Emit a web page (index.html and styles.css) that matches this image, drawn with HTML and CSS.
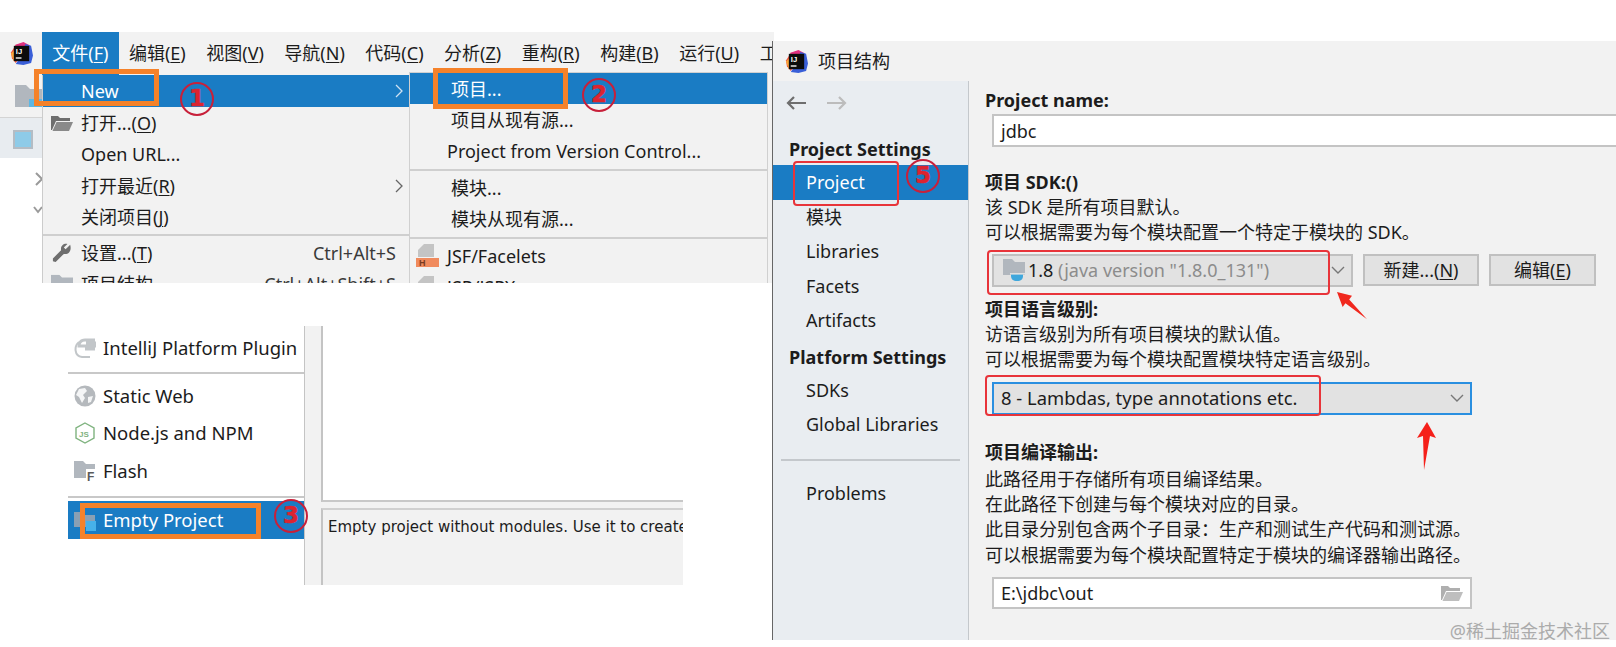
FILE: index.html
```html
<!DOCTYPE html>
<html lang="zh-CN">
<head>
<meta charset="utf-8">
<title>项目结构</title>
<link rel="stylesheet" href="styles.css">
</head>
<body>
<svg class="defs" width="0" height="0" aria-hidden="true">
  <symbol id="logo" viewBox="0 0 24 24">
    <path d="M1 11 L6 3 L13 1 L17 6 L6 22 L2 17Z" fill="#f0503c"/>
    <path d="M5 3 L14 0 L20 3 L23 10 L18 12 L9 6Z" fill="#e0317f"/>
    <path d="M16 2 L22 4 L24 14 L22 22 L14 24 L6 23 L12 14Z" fill="#3a5fd8"/>
    <path d="M1 12 L5 8 L7 18 L4 20Z" fill="#f9a53a"/>
    <rect x="4" y="4" width="16" height="16" fill="#0c0c0c"/>
    <text x="6" y="12.5" class="logo-text">IJ</text>
    <rect x="6" y="16" width="6" height="1.4" fill="#fff"/>
  </symbol>
  <symbol id="folder" viewBox="0 0 24 20">
    <path d="M0 0H9L12 3H24V20H0Z" fill="#b1b7be"/>
  </symbol>
  <symbol id="open-folder" viewBox="0 0 22 16">
    <path d="M0 1H7L9 3H19V6H5L1 15H0Z" fill="#6e6e6e"/>
    <path d="M5.5 7H22L18 16H1.5Z" fill="#8a8a8a"/>
  </symbol>
</svg>

<main class="canvas">

  <section class="ide">
    <header class="menubar">
      <span class="menubar-logo"><svg class="logo-icon"><use href="#logo"/></svg></span>
      <span class="menubar-item menubar-item-active">文件(<u>F</u>)</span>
      <span class="menubar-item">编辑(<u>E</u>)</span>
      <span class="menubar-item">视图(<u>V</u>)</span>
      <span class="menubar-item">导航(<u>N</u>)</span>
      <span class="menubar-item">代码(<u>C</u>)</span>
      <span class="menubar-item">分析(<u>Z</u>)</span>
      <span class="menubar-item">重构(<u>R</u>)</span>
      <span class="menubar-item">构建(<u>B</u>)</span>
      <span class="menubar-item">运行(<u>U</u>)</span>
      <span class="menubar-item">工</span>
    </header>
    <div class="ide-body">
      <aside class="strip">
        <div class="strip-tool">
          <svg class="strip-folder" viewBox="0 0 28 22"><path d="M0 0H11L15 4H28V22H0Z" fill="#b1b7be"/><rect x="14" y="14" width="14" height="8" fill="#5db7e4"/></svg>
        </div>
        <div class="strip-tab"><span class="strip-square"></span></div>
        <div class="strip-tree">
          <svg class="strip-chevron" viewBox="0 0 8 14"><path d="M1 1L7 7L1 13" fill="none" stroke="#9a9a9a" stroke-width="2"/></svg>
          <svg class="strip-chevron strip-chevron-down" viewBox="0 0 10 8"><path d="M1 1L5 6L9 1" fill="none" stroke="#9a9a9a" stroke-width="2"/></svg>
        </div>
      </aside>
      <div class="menu">
        <div class="row row-active"><span class="slot"></span><span class="grow">New</span><svg class="chev" viewBox="0 0 8 14"><path d="M1 1L7 7L1 13" fill="none" stroke="#cfe2f2" stroke-width="1.3"/></svg></div>
        <div class="row"><span class="slot"><svg class="menu-icon" viewBox="0 0 22 16"><use href="#open-folder"/></svg></span><span class="grow">打开...(<u>O</u>)</span></div>
        <div class="row"><span class="slot"></span><span class="grow">Open URL...</span></div>
        <div class="row"><span class="slot"></span><span class="grow">打开最近(<u>R</u>)</span><svg class="chev" viewBox="0 0 8 14"><path d="M1 1L7 7L1 13" fill="none" stroke="#666" stroke-width="1.3"/></svg></div>
        <div class="row"><span class="slot"></span><span class="grow">关闭项目(<u>J</u>)</span></div>
        <div class="sep"></div>
        <div class="row"><span class="slot"><svg class="menu-icon" viewBox="0 0 22 22"><path d="M20 2 L15 7 L13 5 L17 1 C13 0 9 3 10 8 L1 17 L1 20 L4 21 L13 12 C18 13 22 9 20 2Z" fill="#6e6e6e"/></svg></span><span class="grow">设置...(<u>T</u>)</span><span class="shortcut">Ctrl+Alt+S</span></div>
        <div class="row"><span class="slot"><svg class="menu-icon" viewBox="0 0 24 20"><use href="#folder"/></svg></span><span class="grow">项目结构</span><span class="shortcut">Ctrl+Alt+Shift+S</span></div>
      </div>
      <div class="submenu">
        <div class="row row-active row-first sub-row">项目...</div>
        <div class="row sub-row">项目从现有源...</div>
        <div class="row sub-row sub-row-wide">Project from Version Control...</div>
        <div class="sep"></div>
        <div class="row sub-row">模块...</div>
        <div class="row sub-row">模块从现有源...</div>
        <div class="sep"></div>
        <div class="row sub-row sub-row-icon"><svg class="jsf-icon" viewBox="0 0 23 23"><path d="M8 0H18V13H2V6Z" fill="#c4c4c4"/><rect y="14" width="23" height="9" fill="#f08a5d"/><text x="3" y="22" class="jsf-text">H</text></svg>JSF/Facelets</div>
        <div class="row sub-row sub-row-icon"><svg class="jsf-icon" viewBox="0 0 23 23"><path d="M8 0H18V13H2V6Z" fill="#c4c4c4"/></svg>JSP/JSPX</div>
      </div>
    </div>
  </section>

  <section class="wizard">
    <div class="wizard-list">
      <div class="wizard-row wizard-row-first"><svg class="wizard-icon" viewBox="0 0 22 22"><path d="M21 3H11C6 3 5 7 5 9H21V6H12M11 12H21" fill="none" stroke="#c2c6c9" stroke-width="3"/><path d="M5 5C0 9 0 19 8 20H16" fill="none" stroke="#c2c6c9" stroke-width="2"/></svg>IntelliJ Platform Plugin</div>
      <div class="wizard-sep"></div>
      <div class="wizard-row"><svg class="wizard-icon" viewBox="0 0 22 22"><circle cx="11" cy="11" r="10.5" fill="#b5b9bd"/><path d="M5 4L11 3L13 6L9 10L11 13L8 18L5 12L2 10Z M14 12L19 11L17 17L14 18Z" fill="#f4f5f6"/></svg>Static Web</div>
      <div class="wizard-row"><svg class="wizard-icon" viewBox="0 0 22 22"><path d="M11 1L20 6V16L11 21L2 16V6Z" fill="none" stroke="#7fb37f" stroke-width="1.4"/><text x="5" y="15" class="js-text">JS</text></svg>Node.js and NPM</div>
      <div class="wizard-row"><svg class="wizard-icon" viewBox="0 0 22 22"><path d="M0 1H9L12 4H21V18H0Z" fill="#b1b7be"/><rect x="12" y="9" width="10" height="13" fill="#fff"/><text x="13" y="21" class="f-text">F</text></svg>Flash</div>
      <div class="wizard-sep wizard-sep-low"></div>
      <div class="wizard-row wizard-row-active"><svg class="wizard-icon" viewBox="0 0 22 22"><path d="M0 3H9V6H21V18H0Z" fill="#8aa0b4"/><rect x="12" y="12" width="10" height="10" fill="#47b1ea"/></svg>Empty Project</div>
    </div>
    <div class="wizard-gutter"></div>
    <div class="wizard-detail">
      <div class="wizard-blank"></div>
      <div class="wizard-desc">Empty project without modules. Use it to create</div>
    </div>
  </section>

  <section class="dialog">
    <header class="titlebar"><svg class="logo-icon"><use href="#logo"/></svg><span>项目结构</span></header>
    <div class="dialog-body">
      <nav class="sidebar">
        <div class="history">
          <svg class="history-arrow" viewBox="0 0 20 14"><path d="M20 7H2M8 1L2 7L8 13" fill="none" stroke="#6e6e6e" stroke-width="2.2"/></svg>
          <svg class="history-arrow" viewBox="0 0 20 14"><path d="M0 7H18M12 1L18 7L12 13" fill="none" stroke="#bcbcbc" stroke-width="2.2"/></svg>
        </div>
        <div class="side-head">Project Settings</div>
        <div class="side-item side-item-active">Project</div>
        <div class="side-item">模块</div>
        <div class="side-item">Libraries</div>
        <div class="side-item">Facets</div>
        <div class="side-item">Artifacts</div>
        <div class="side-head side-head-platform">Platform Settings</div>
        <div class="side-item">SDKs</div>
        <div class="side-item">Global Libraries</div>
        <div class="side-rule"></div>
        <div class="side-item">Problems</div>
      </nav>
      <div class="content">
        <div class="label label-first">Project name:</div>
        <div class="field field-name">jdbc</div>
        <div class="label label-sdk">项目 SDK:()</div>
        <div class="line">该 SDK 是所有项目默认。</div>
        <div class="line">可以根据需要为每个模块配置一个特定于模块的 SDK。</div>
        <div class="sdk-row">
          <div class="combo combo-sdk">
            <svg class="sdk-icon" viewBox="0 0 22 22"><path d="M0 0H9L12 3H22V16H0Z" fill="#b1b7be"/><path d="M8 14H20V17C20 20 18 22 14 22C10 22 8 20 8 17Z" fill="#3fa7dc"/><rect x="7" y="14" width="15" height="1.6" fill="#e0e0e0"/></svg>
            <span class="grow">1.8 <span class="muted">(java version "1.8.0_131")</span></span>
            <svg class="combo-chev" viewBox="0 0 14 8"><path d="M1 1L7 7L13 1" fill="none" stroke="#777" stroke-width="1.4"/></svg>
          </div>
          <div class="btn btn-new">新建...(<u>N</u>)</div>
          <div class="btn btn-edit">编辑(<u>E</u>)</div>
        </div>
        <div class="label label-lang">项目语言级别:</div>
        <div class="line">访语言级别为所有项目模块的默认值。</div>
        <div class="line">可以根据需要为每个模块配置模块特定语言级别。</div>
        <div class="combo combo-lang">
          <span class="grow">8 - Lambdas, type annotations etc.</span>
          <svg class="combo-chev" viewBox="0 0 14 8"><path d="M1 1L7 7L13 1" fill="none" stroke="#777" stroke-width="1.4"/></svg>
        </div>
        <div class="label label-out">项目编译输出:</div>
        <div class="line line-first">此路径用于存储所有项目编译结果。</div>
        <div class="line">在此路径下创建与每个模块对应的目录。</div>
        <div class="line">此目录分别包含两个子目录：生产和测试生产代码和测试源。</div>
        <div class="line">可以根据需要为每个模块配置特定于模块的编译器输出路径。</div>
        <div class="field field-out"><span class="grow">E:\jdbc\out</span><svg class="out-icon" viewBox="0 0 22 16"><use href="#open-folder"/></svg></div>
      </div>
    </div>
  </section>

  <span class="orange orange-new"></span>
  <span class="orange orange-project"></span>
  <span class="orange orange-empty"></span>
  <span class="badge badge-1">1</span>
  <span class="badge badge-2">2</span>
  <span class="badge badge-3">3</span>
  <span class="badge badge-5">5</span>
  <span class="redbox redbox-project"></span>
  <span class="redbox redbox-sdk"></span>
  <span class="redbox redbox-lang"></span>
  <svg class="arrow arrow-sdk" viewBox="0 0 34 32"><path d="M1 1L17 5L14 9L33 30L10 13L7 17Z" fill="#f0281e"/></svg>
  <svg class="arrow arrow-lang" viewBox="0 0 19 48"><path d="M10 0L19 16L13 14L7 48L6 14L0 16Z" fill="#f5201a"/></svg>
  <span class="watermark">@稀土掘金技术社区</span>
</main>
</body>
</html>
```
FILE: styles.css
```css
* { box-sizing: border-box; }
html, body { margin: 0; padding: 0; background: #fff; }
body {
  font-family: "Noto Sans", "Noto Sans CJK SC", sans-serif;
  font-size: 18px;
  line-height: 26px;
  color: #1c1c1c;
}
.defs { display: none; }
.canvas { position: relative; width: 1616px; height: 647px; overflow: hidden; background: #fff; }
u { text-underline-offset: 2px; text-decoration-thickness: 1px; }
.grow { flex: 1; }

.logo-icon { width: 23px; height: 23px; flex: none; }
.logo-text { font: 700 8px "Liberation Sans", sans-serif; fill: #fff; }

/* IDE window */
.ide { position: absolute; left: 0; top: 32px; width: 774px; height: 251px; background: #f2f2f2; overflow: hidden; }
.menubar { display: flex; height: 43px; }
.menubar-logo { width: 42px; flex: none; display: flex; align-items: center; justify-content: center; }
.menubar-item { flex: none; padding: 0 10.25px; line-height: 42px; white-space: nowrap; }
.menubar-item-active { background: #1a7cc4; color: #fff; }
.ide-body { position: relative; display: flex; height: 208px; }
.strip { width: 42px; flex: none; display: flex; flex-direction: column; }
.strip-tool { height: 43px; border-bottom: 1px solid #d4d4d4; padding: 10px 0 0 15px; overflow: hidden; }
.strip-folder { width: 28px; height: 22px; display: block; }
.strip-tab { height: 40px; background: #e8ecf0; padding: 12px 0 0 13px; }
.strip-square { display: block; width: 20px; height: 19px; background: #8ecbe8; border: 2px solid #b4bcc4; }
.strip-tree { flex: 1; background: #fff; padding: 14px 0 0 35px; }
.strip-chevron { display: block; width: 8px; height: 14px; }
.strip-chevron-down { width: 10px; height: 8px; margin: 20px 0 0 -2px; }

.menu { width: 367px; flex: none; border-left: 1px solid #ccc; }
.row { display: flex; align-items: center; height: 31.5px; padding-right: 5px; white-space: nowrap; }
.row-active { background: #1a7cc4; color: #fff; height: 32px; }
.slot { width: 38px; flex: none; display: flex; justify-content: center; }
.menu-icon { width: 22px; height: 20px; }
.chev { width: 8px; height: 14px; margin-right: 1px; }
.shortcut { color: #3a3a3a; margin-right: 8px; }
.sep { height: 2px; margin: 1px 0; background: #cfcfcf; }

.submenu { position: absolute; left: 409px; top: -3px; width: 359px; height: 220px; background: #f2f2f2; border: 1px solid #d0d0d0; border-bottom: 0; }
.submenu .sep { margin: 1.5px 0; }
.row-first { height: 31px; }
.sub-row { padding-left: 41px; }
.sub-row-wide { padding-left: 37px; }
.sub-row-icon { padding-left: 6px; }
.jsf-icon { width: 23px; height: 23px; margin-right: 8px; flex: none; }
.jsf-text { font: 700 9px "Liberation Sans", sans-serif; fill: #7a3a20; }

/* Wizard */
.wizard { position: absolute; left: 68px; top: 326px; width: 615px; height: 259px; display: flex; background: #fff; overflow: hidden; }
.wizard-list { width: 236px; flex: none; font-size: 18.5px; }
.wizard-row { display: flex; align-items: center; height: 37.5px; white-space: nowrap; padding-left: 6px; }
.wizard-row-first { height: 37px; margin-top: 3px; }
.wizard-row-active { background: #1a7cc4; color: #fff; height: 38px; }
.wizard-icon { width: 22px; height: 22px; margin-right: 7px; flex: none; }
.js-text { font: 700 8px "Liberation Sans", sans-serif; fill: #7fb37f; }
.f-text { font: 700 12px "Liberation Sans", sans-serif; fill: #5a5a5a; }
.wizard-sep { height: 2px; margin: 6px 0 3px; background: #c8c8c8; }
.wizard-sep-low { margin: 6px 0 3px; }
.wizard-gutter { width: 17px; flex: none; background: #f2f2f2; border-left: 1px solid #c4c4c4; }
.wizard-detail { flex: 1; min-width: 0; display: flex; flex-direction: column; background: #f2f2f2; }
.wizard-blank { height: 176px; background: #fff; border-left: 2px solid #c4c4c4; border-bottom: 2px solid #c8c8c8; flex: none; }
.wizard-desc {
  flex: 1; margin-top: 6px; padding: 4px 0 0 5px;
  border-left: 2px solid #c4c4c4; border-top: 2px solid #d0d0d0;
  font-family: "DejaVu Sans", sans-serif; font-size: 15px; white-space: nowrap; overflow: hidden;
}

/* Project structure dialog */
.dialog { position: absolute; left: 772px; top: 41px; width: 844px; height: 599px; background: #f2f2f2; border-left: 1px solid #666; display: flex; flex-direction: column; }
.titlebar { height: 40px; flex: none; display: flex; align-items: center; gap: 10px; padding-left: 12px; }
.dialog-body { flex: 1; display: flex; min-height: 0; }
.sidebar { width: 196px; flex: none; background: #e9edf1; border-right: 1px solid #c4c8cc; }
.history { height: 52px; display: flex; gap: 21px; padding: 15px 0 0 13px; }
.history-arrow { width: 20px; height: 14px; }
.side-head { height: 32px; line-height: 32px; padding-left: 16px; font-weight: 700; white-space: nowrap; }
.side-head-platform { margin-top: 3px; }
.side-item { height: 34.5px; line-height: 34.5px; padding-left: 33px; white-space: nowrap; }
.side-item-active { background: #1a7cc4; color: #fff; }
.side-rule { height: 2px; margin: 17px 8px 15.5px 8px; background: #c4c8cc; }

.content { flex: 1; min-width: 0; padding-left: 16px; overflow: hidden; }
.label { font-weight: 700; white-space: nowrap; }
.label-first { margin: 6px 0 1px; }
.label-sdk { margin-top: 22px; }
.label-lang { margin-top: 9px; }
.label-out { margin-top: 24px; }
.line { white-space: nowrap; line-height: 25.4px; }
.line-first { margin-top: 2px; }
.field { display: flex; align-items: center; margin-left: 7px; height: 33px; background: #fff; border: 2px solid #c4c4c4; padding: 0 7px; }
.field-name { border-right: 0; }
.field-out { width: 480px; height: 32px; margin-top: 8.4px; }
.out-icon { width: 22px; height: 16px; opacity: .55; }
.sdk-row { display: flex; margin: 8px 0 0 7px; height: 33px; gap: 10px; }
.combo { display: flex; align-items: center; height: 33px; background: #e2e2e2; border: 2px solid #c0c0c0; padding-left: 7px; white-space: nowrap; }
.combo-sdk { width: 361px; padding-left: 9px; }
.sdk-icon { width: 22px; height: 22px; margin-right: 3px; }
.muted { color: #8c8c8c; }
.combo-chev { width: 14px; height: 8px; margin-right: 6px; }
.combo-lang { width: 480px; margin: 9px 0 0 7px; border-color: #2a8fe0; font-size: 18.4px; }
.btn { height: 32px; line-height: 28px; text-align: center; background: #e2e2e2; border: 2px solid #c0c0c0; white-space: nowrap; }
.btn-new { width: 116px; }
.btn-edit { width: 107px; }

/* Annotations laid over the screenshots */
.orange { position: absolute; border: 5px solid #f5822a; }
.orange-new { left: 34px; top: 69px; width: 125px; height: 37px; }
.orange-project { left: 433px; top: 68px; width: 135px; height: 41px; }
.orange-empty { left: 80px; top: 503px; width: 181px; height: 36px; }
.badge {
  position: absolute; width: 34px; height: 34px; border-radius: 50%;
  border: 2.5px solid #c8203a; color: #dc2430; text-align: center;
  font: 700 23px/29px "DejaVu Sans", sans-serif;
  -webkit-text-stroke: .6px #dc2430;
}
.badge-1 { left: 180px; top: 82px; }
.badge-2 { left: 582px; top: 78px; }
.badge-3 { left: 274px; top: 499px; }
.badge-5 { left: 906px; top: 159px; }
.redbox { position: absolute; border: 2px solid #e8343a; border-radius: 4px; }
.redbox-project { left: 793px; top: 161px; width: 106px; height: 45px; }
.redbox-sdk { left: 987px; top: 250px; width: 343px; height: 45px; }
.redbox-lang { left: 985px; top: 375px; width: 336px; height: 41px; }
.arrow { position: absolute; }
.arrow-sdk { left: 1336px; top: 291px; width: 32px; height: 30px; }
.arrow-lang { left: 1417px; top: 422px; width: 19px; height: 48px; }
.watermark { position: absolute; right: 6px; top: 618px; color: #ababab; white-space: nowrap; }
```
